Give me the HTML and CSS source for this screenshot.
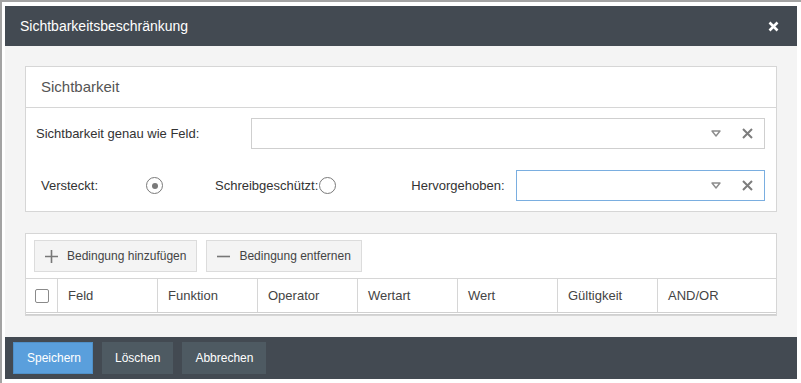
FILE: index.html
```html
<!DOCTYPE html>
<html lang="de">

<head>
    <meta charset="UTF-8">
    <meta name="viewport" content="width=device-width, initial-scale=1.0">
    <title>Sichtbarkeitsbeschränkung</title>
    <link rel="stylesheet" href="styles.css">
</head>

<body>
    <div class="frame">
        <div class="dialog">
            <div class="dialog-header">
                <span class="dialog-title">Sichtbarkeitsbeschränkung</span>
                <svg class="dialog-close" width="11" height="11" viewBox="0 0 11 11">
                    <path d="M1.5 1.5 L9.5 9.5 M9.5 1.5 L1.5 9.5" stroke="white" stroke-width="2.6" />
                </svg>
            </div>

            <div class="dialog-body">
                <div class="panel">
                    <div class="panel-title">Sichtbarkeit</div>
                    <div class="panel-content">
                        <div class="row">
                            <label class="label-wide">Sichtbarkeit genau wie Feld:</label>
                            <div class="combo">
                                <svg class="combo-arrow" width="10" height="7" viewBox="0 0 10 7">
                                    <path d="M1 1 L9 1 L5 6 Z" fill="none" stroke="#8c8c8c" stroke-width="1.4" stroke-linejoin="round" />
                                </svg>
                                <svg class="combo-clear" width="11" height="11" viewBox="0 0 11 11">
                                    <path d="M1 1 L10 10 M10 1 L1 10" stroke="#7d7d7d" stroke-width="2" />
                                </svg>
                            </div>
                        </div>
                        <div class="row">
                            <label class="label-hidden">Versteckt:</label>
                            <span class="radio checked"></span>
                            <label class="label-ro">Schreibgeschützt:</label>
                            <span class="radio"></span>
                            <label class="label-hl">Hervorgehoben:</label>
                            <div class="combo focus">
                                <svg class="combo-arrow" width="10" height="7" viewBox="0 0 10 7">
                                    <path d="M1 1 L9 1 L5 6 Z" fill="none" stroke="#8c8c8c" stroke-width="1.4" stroke-linejoin="round" />
                                </svg>
                                <svg class="combo-clear" width="11" height="11" viewBox="0 0 11 11">
                                    <path d="M1 1 L10 10 M10 1 L1 10" stroke="#7d7d7d" stroke-width="2" />
                                </svg>
                            </div>
                        </div>
                    </div>
                </div>

                <div class="panel">
                    <div class="toolbar">
                        <button class="tool-btn">
                            <svg class="tool-icon" width="13" height="13" viewBox="0 0 13 13">
                                <path d="M6.5 0 V13 M0 6.5 H13" stroke="#777" stroke-width="1.6" />
                            </svg>
                            Bedingung hinzufügen
                        </button>
                        <button class="tool-btn">
                            <svg class="tool-icon" width="13" height="13" viewBox="0 0 13 13">
                                <path d="M0 6.5 H13" stroke="#777" stroke-width="1.6" />
                            </svg>
                            Bedingung entfernen
                        </button>
                    </div>
                    <div class="grid-head">
                        <div class="cell cell-check"><span class="checkbox"></span></div>
                        <div class="cell">Feld</div>
                        <div class="cell">Funktion</div>
                        <div class="cell">Operator</div>
                        <div class="cell">Wertart</div>
                        <div class="cell">Wert</div>
                        <div class="cell">Gültigkeit</div>
                        <div class="cell cell-last">AND/OR</div>
                    </div>
                </div>
            </div>

            <div class="dialog-footer">
                <button class="btn btn-primary">Speichern</button>
                <button class="btn">Löschen</button>
                <button class="btn">Abbrechen</button>
            </div>
        </div>
    </div>
</body>

</html>
```

FILE: styles.css
```css
body {
    font-family: "Liberation Sans", Arial, sans-serif;
    font-size: 13px;
    margin: 0;
    padding: 0;
    background-color: #ffffff;
    color: #333;
}

.frame {
    width: 801px;
    height: 383px;
    box-sizing: border-box;
    border-top: 2px solid #a3a3a3;
    border-left: 2px solid #a3a3a3;
    padding: 4px 0 0 3px;
}

.dialog {
    width: 792px;
    display: flex;
    flex-direction: column;
}

.dialog-header {
    height: 40px;
    background-color: #434a52;
    color: white;
    display: flex;
    align-items: center;
    justify-content: space-between;
    padding: 0 18px 0 15px;
}

.dialog-title {
    font-size: 14px;
}

.dialog-body {
    background-color: #f4f4f4;
    padding: 20px 20px 21px 20px;
    display: flex;
    flex-direction: column;
    gap: 21px;
}

.panel {
    background: white;
    border: 1px solid #d6d6d6;
}

.panel-title {
    height: 40px;
    line-height: 40px;
    padding-left: 15px;
    font-size: 15px;
    color: #555;
    border-bottom: 1px solid #d6d6d6;
}

.panel-content {
    padding: 10px 11px 10px 10px;
    display: flex;
    flex-direction: column;
    gap: 21px;
}

.row {
    display: flex;
    align-items: center;
    height: 31px;
}

.label-wide {
    width: 215px;
}

.label-hidden {
    margin-left: 5px;
    width: 105px;
}

.label-ro {
    margin-left: 52px;
    margin-right: 1px;
}

.label-hl {
    margin-left: 75px;
    width: 105px;
}

.combo {
    flex: 1;
    height: 31px;
    box-sizing: border-box;
    border: 1px solid #cfcfcf;
    display: flex;
    align-items: center;
    justify-content: flex-end;
    padding-right: 11px;
}

.combo.focus {
    border-color: #7aaee0;
}

.combo-arrow {
    margin-right: 21px;
}

.radio {
    width: 17px;
    height: 17px;
    box-sizing: border-box;
    border: 1px solid #7a7a7a;
    border-radius: 50%;
    display: flex;
    align-items: center;
    justify-content: center;
}

.radio.checked::after {
    content: "";
    width: 6px;
    height: 6px;
    border-radius: 50%;
    background: #7a7a7a;
}

.toolbar {
    display: flex;
    gap: 9px;
    padding: 6px 8px 6px 8px;
    border-bottom: 1px solid #d6d6d6;
}

.tool-btn {
    font-family: "Liberation Sans", Arial, sans-serif;
    font-size: 12px;
    color: #444;
    background: #f4f4f4;
    border: 1px solid #dcdcdc;
    height: 32px;
    padding: 0 10px 0 10px;
    display: flex;
    align-items: center;
}

.tool-icon {
    margin-right: 9px;
}

.grid-head {
    display: flex;
    height: 33px;
    border-bottom: 3px double #d0d0d0;
}

.cell {
    width: 100px;
    box-sizing: border-box;
    border-right: 1px solid #d6d6d6;
    padding-left: 10px;
    display: flex;
    align-items: center;
    color: #444;
}

.cell-check {
    width: 32px;
    padding-left: 0;
    justify-content: center;
}

.cell-last {
    border-right: none;
    flex: 1;
}

.checkbox {
    width: 14px;
    height: 14px;
    box-sizing: border-box;
    border: 1px solid #8a8a8a;
    border-radius: 2px;
}

.dialog-footer {
    background-color: #434a52;
    height: 42px;
    display: flex;
    align-items: center;
    gap: 9px;
    padding-left: 8px;
}

.btn {
    font-family: "Liberation Sans", Arial, sans-serif;
    font-size: 12px;
    color: white;
    background: #4e5a62;
    border: none;
    height: 32px;
    padding: 0 13px;
}

.btn-primary {
    background: #5a9fdc;
    width: 80px;
    border: 1px solid #4f90c8;
}
```
